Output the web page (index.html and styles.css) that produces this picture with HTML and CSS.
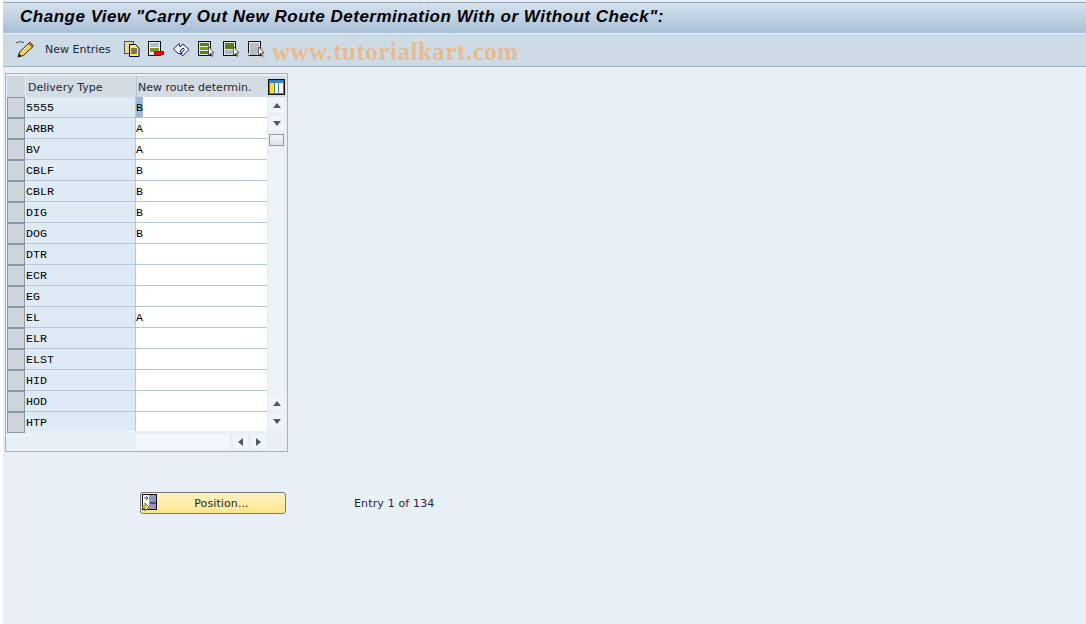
FILE: index.html
```html
<!DOCTYPE html>
<html lang="en">
<head>
  <meta charset="UTF-8">
  <title>Change View</title>
  <link rel="stylesheet" href="styles.css">
</head>
<body>
  <div class="page">
    <div class="titlebar">
      <h1 class="title">Change View "Carry Out New Route Determination With or Without Check":</h1>
    </div>

    <div class="toolbar">
      <svg class="tool-pen" width="20" height="18" viewBox="0 0 20 18">
        <path d="M1 3c1-2 2 1 3-1s2 1 3 0 1 1 2 1" fill="none" stroke="#333" stroke-width="1"/>
        <path d="M3 17l1.5-5L14 3l4 3.500-9.500 9z" fill="#f7d04a" stroke="#222"/>
        <path d="M13.500 3.500L17.500 7l1-1.500L15 2z" fill="#e8623a" stroke="#222" stroke-width="0.600"/>
        <path d="M3 17l1-3.500 2.500 2.300z" fill="#222"/>
        <path d="M7 11l6-6" stroke="#fff6c8"/>
      </svg>
      <span class="tool-label">New Entries</span>
      <div class="tool-icons">
        <svg width="16" height="16" viewBox="0 0 16 16">
          <rect x="0.500" y="0.500" width="9" height="12" fill="#e0dc9a" stroke="#555"/>
          <path d="M5.500 3.500h6l3.500 3.500v8.500H5.500z" fill="#ffec4a" stroke="#00007a"/>
          <path d="M7 8h6M7 10h6M7 12h6" stroke="#00007a"/>
        </svg>
        <svg width="17" height="16" viewBox="0 0 17 16">
          <rect x="0.500" y="0.500" width="12" height="14" fill="#eef2f5" stroke="#111"/>
          <path d="M2 3h9M2 5h9" stroke="#7a8a9a"/>
          <rect x="2" y="7" width="9" height="4" fill="#7f9a20"/>
          <rect x="6" y="10" width="10" height="4" fill="#dd0010"/>
        </svg>
        <svg width="17" height="16" viewBox="0 0 17 16">
          <path d="M0.500 8L6 2.500l1 3.500 3-3 6 5.500-6.500 6.500-2-2 4-4.500-1.500-1.500-3 3 2 2.500H5z" fill="#f4f8ff" stroke="#0a1aa0"/>
        </svg>
        <svg width="17" height="16" viewBox="0 0 17 16">
          <rect x="0.500" y="0.500" width="12" height="14" fill="#dfe6ea" stroke="#111"/>
          <rect x="2" y="2" width="9" height="3" fill="#5f7f10"/>
          <rect x="2" y="6" width="9" height="3" fill="#7f9a20"/>
          <rect x="2" y="10" width="9" height="3" fill="#5f7f10"/>
          <path d="M10.500 5.500v9l2-2 1.500 3 1-.5-1.500-3h2.500z" fill="#fff" stroke="#222" stroke-width="0.700"/>
        </svg>
        <svg width="17" height="16" viewBox="0 0 17 16">
          <rect x="0.500" y="0.500" width="12" height="14" fill="#dfe6ea" stroke="#111"/>
          <rect x="2" y="2" width="9" height="6" fill="#5f7f10"/>
          <path d="M2 10h9M2 12h9" stroke="#7a8a9a"/>
          <path d="M10.500 5.500v9l2-2 1.500 3 1-.5-1.500-3h2.500z" fill="#fff" stroke="#222" stroke-width="0.700"/>
        </svg>
        <svg width="17" height="16" viewBox="0 0 17 16">
          <rect x="0.500" y="0.500" width="12" height="14" fill="#eef1f3" stroke="#111"/>
          <path d="M2 3h9M2 5h9M2 7h9M2 9h9M2 11h9M2 13h7" stroke="#7a8a9a"/>
          <path d="M10.500 5.500v9l2-2 1.500 3 1-.5-1.500-3h2.500z" fill="#fff" stroke="#222" stroke-width="0.700"/>
        </svg>
      </div>
      <div class="watermark">
        <span class="watermark-ring"></span>
        <span class="watermark-text">www.tutorialkart.com</span>
      </div>
    </div>

    <div class="content">
      <div class="table-panel">
        <div class="table-head">
          <div class="corner"></div>
          <div class="head-cell head-first">Delivery Type</div>
          <div class="head-cell head-second">New route determin.</div>
          <div class="head-config">
            <svg width="17" height="16" viewBox="0 0 17 16">
              <rect x="0.500" y="0.500" width="16" height="15" fill="#3a7fc0" stroke="#111"/>
              <rect x="2" y="4" width="4" height="10" fill="#ffe600"/>
              <rect x="7" y="4" width="3" height="10" fill="#fff"/>
              <rect x="11" y="4" width="4" height="10" fill="#fff"/>
            </svg>
          </div>
        </div>

        <div class="table-body">
          <div class="rows" id="rows"></div>
          <div class="vscroll">
            <div class="scroll-btn"><span class="arrow-up"></span></div>
            <div class="scroll-btn"><span class="arrow-down"></span></div>
            <div class="scroll-thumb"></div>
            <div class="scroll-track"></div>
            <div class="scroll-btn"><span class="arrow-up"></span></div>
            <div class="scroll-btn"><span class="arrow-down"></span></div>
          </div>
        </div>

        <div class="hscroll">
          <div class="hscroll-track"></div>
          <div class="scroll-btn-h"><span class="arrow-left"></span></div>
          <div class="scroll-btn-h"><span class="arrow-right"></span></div>
        </div>
      </div>

      <div class="position-row">
        <button class="position-btn">
          <svg class="position-icon" width="16" height="17" viewBox="0 0 16 17">
            <rect x="0.500" y="0.500" width="14" height="15" fill="#fff" stroke="#111"/>
            <rect x="7" y="1" width="7" height="14" fill="#8f94c0"/>
            <path d="M8 9h6" stroke="#111"/>
            <path d="M2 4h3M4 2l2 2-2 2" fill="none" stroke="#555"/>
            <path d="M0 12h3V9l4 4-4 4v-3H0z" fill="#ffe600" stroke="#222" stroke-width="0.600"/>
          </svg>
          <span>Position...</span>
        </button>
        <span class="entry-count">Entry 1 of 134</span>
      </div>
    </div>
  </div>

  <script>
    const rows = [
      ['5555', 'B'], ['ARBR', 'A'], ['BV', 'A'], ['CBLF', 'B'], ['CBLR', 'B'],
      ['DIG', 'B'], ['DOG', 'B'], ['DTR', ''], ['ECR', ''], ['EG', ''],
      ['EL', 'A'], ['ELR', ''], ['ELST', ''], ['HID', ''], ['HOD', ''], ['HTP', '']
    ];
    const box = document.getElementById('rows');
    rows.forEach((r, i) => {
      const row = document.createElement('div');
      row.className = 'row';
      const val = i === 0 ? '<span class="selected">' + r[1] + '</span>' : r[1];
      row.innerHTML = '<div class="selector"></div><div class="cell-key">' + r[0] + '</div><div class="cell-val">' + val + '</div>';
      box.appendChild(row);
    });
  </script>
</body>
</html>
```

FILE: styles.css
```css
html, body {
  margin: 0;
  padding: 0;
  height: 100%;
  overflow: hidden;
  background-color: #fff;
}

.page {
  height: 624px;
  margin-left: 3px;
  background-color: #e8eff7;
  font-family: 'DejaVu Sans', Tahoma, sans-serif;
  color: #222;
  display: flex;
  flex-direction: column;
}

.titlebar {
  height: 31px;
  margin-top: 2px;
  border-top: 1px solid #98a9bd;
  box-sizing: border-box;
  background: linear-gradient(#d5e2ee, #a9bfd6);
  display: flex;
  align-items: center;
  padding-left: 17px;
}

.title {
  margin: 0 0 2px;
  font: italic bold 17px 'Liberation Sans', Arial, sans-serif;
  letter-spacing: 0.51px;
  color: #000;
  white-space: nowrap;
}

.toolbar {
  height: 34px;
  box-sizing: border-box;
  border-top: 1px solid #e4edf4;
  border-bottom: 1px solid #9fb2c6;
  background-color: #cddbe7;
  display: flex;
  align-items: center;
  padding-left: 12px;
  position: relative;
}

.tool-pen {
  margin-bottom: 3px;
}

.tool-label {
  margin: 0 0 2px 10px;
  font-size: 11px;
  color: #1c2a38;
}

.tool-icons {
  display: flex;
  gap: 8px;
  margin-left: 13px;
  margin-bottom: 3px;
}

.watermark {
  position: absolute;
  left: 245px;
  top: 4px;
  display: flex;
  align-items: center;
  pointer-events: none;
}

.watermark-ring {
  width: 15px;
  height: 15px;
  margin: 4px 7px 0 0;
  border: 1px dashed #e8bf94;
  border-radius: 50%;
}

.watermark-text {
  font: bold 25px 'Liberation Serif', 'Times New Roman', serif;
  letter-spacing: 0.53px;
  color: #e6bc90;
}

.content {
  padding: 6px 0 0 2px;
}

.table-panel {
  width: 283px;
  height: 379px;
  box-sizing: border-box;
  border: 1px solid #9fb2c6;
  background-color: #e8eff7;
  padding: 2px 1px 0;
}

.table-head {
  display: flex;
  height: 21px;
}

.corner {
  width: 18px;
  background-color: #cfd7df;
  border-right: 1px solid #e8eff7;
}

.head-cell {
  box-sizing: border-box;
  background-color: #d3dbe3;
  font-size: 11px;
  line-height: 23px;
  color: #1c2a38;
  white-space: nowrap;
  overflow: hidden;
  padding-left: 2px;
}

.head-first {
  width: 111px;
  border-right: 1px solid #b4c4d4;
}

.head-second {
  width: 130px;
  padding-left: 1px;
}

.head-config {
  width: 19px;
  background-color: #d3dbe3;
  display: flex;
  justify-content: center;
  align-items: center;
}

.table-body {
  display: flex;
  height: 336px;
}

.rows {
  width: 260px;
}

.row {
  display: flex;
  height: 21px;
  font: 11.67px/22px 'Liberation Mono', 'Courier New', monospace;
  color: #000;
}

.selector {
  width: 18px;
  box-sizing: border-box;
  background-color: #cdd4dc;
  border: 1px solid #8c97a3;
}

.cell-key {
  width: 111px;
  box-sizing: border-box;
  background-color: #deebf5;
  border-bottom: 1px solid #b7c6d6;
  border-right: 1px solid #b7c6d6;
  padding-left: 1px;
}

.cell-val {
  width: 131px;
  box-sizing: border-box;
  background-color: #fff;
  border-bottom: 1px solid #b7c6d6;
}

.row:last-child .cell-key,
.row:last-child .cell-val {
  height: 19px;
  border-bottom: 0;
}

.selected {
  background-color: #9db9d6;
  display: inline-block;
  height: 20px;
  line-height: 22px;
  vertical-align: top;
}

.vscroll {
  width: 20px;
  display: flex;
  flex-direction: column;
  align-items: center;
  padding-top: 1px;
  box-sizing: border-box;
}

.scroll-btn {
  width: 15px;
  height: 15px;
  background-color: #f1f5f9;
  display: flex;
  align-items: center;
  justify-content: center;
  margin-bottom: 3px;
}

.scroll-thumb {
  width: 13px;
  height: 10px;
  background: linear-gradient(#f1f5f9, #d9e5f0);
  border: 1px solid #8f9aa6;
  margin-bottom: 1px;
}

.scroll-track {
  width: 15px;
  height: 247px;
  background-color: #eef3f8;
  margin-bottom: 2px;
}

.arrow-up, .arrow-down, .arrow-left, .arrow-right {
  width: 0;
  height: 0;
  border-style: solid;
  border-color: transparent;
}

.arrow-up {
  border-width: 0 4px 5px;
  border-bottom-color: #4d5a66;
}

.arrow-down {
  border-width: 5px 4px 0;
  border-top-color: #4d5a66;
}

.arrow-left {
  border-width: 4px 5px 4px 0;
  border-right-color: #4d5a66;
}

.arrow-right {
  border-width: 4px 0 4px 5px;
  border-left-color: #4d5a66;
}

.hscroll {
  display: flex;
  margin-top: 1px;
  margin-left: 129px;
  gap: 3px;
}

.hscroll-track {
  width: 94px;
  height: 15px;
  background-color: #f4f7fa;
}

.scroll-btn-h {
  width: 15px;
  height: 15px;
  background-color: #f1f5f9;
  display: flex;
  align-items: center;
  justify-content: center;
}

.position-row {
  display: flex;
  align-items: center;
  margin: 40px 0 0 135px;
}

.position-btn {
  width: 146px;
  height: 22px;
  box-sizing: border-box;
  border: 1px solid #77787a;
  border-radius: 3px;
  background: linear-gradient(#fff3c4, #ffe68c);
  display: flex;
  align-items: center;
  padding: 0 0 0 1px;
  font: 11px 'DejaVu Sans', Tahoma, sans-serif;
  letter-spacing: 0.1px;
  color: #1c2a38;
}

.position-btn span {
  flex: 1;
  text-align: center;
  padding-top: 1px;
}

.position-icon {
  margin-top: -2px;
}

.entry-count {
  margin-left: 68px;
  padding-top: 1px;
  font-size: 11px;
  letter-spacing: 0.15px;
  color: #1c2a38;
}
```
